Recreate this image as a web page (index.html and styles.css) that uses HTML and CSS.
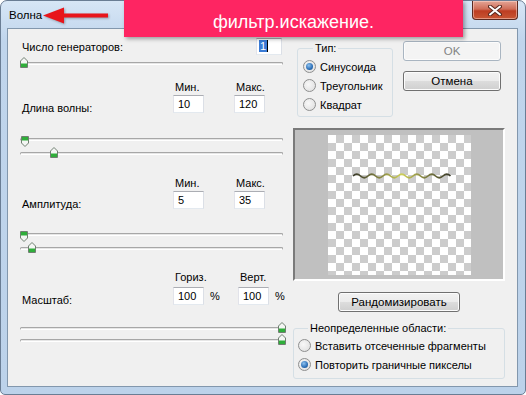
FILE: index.html
```html
<!DOCTYPE html>
<html lang="ru">
<head>
    <meta charset="UTF-8">
    <title>Волна</title>
    <link rel="stylesheet" href="styles.css">
</head>
<body>
    <div class="window">
        <div class="titlebar">
            <span class="title">Волна</span>
            <button class="close" aria-label="Закрыть">
                <svg width="14" height="11" viewBox="0 0 14 11">
                    <path d="M2 1.5 L12 9.5 M12 1.5 L2 9.5" stroke="#5a2a20" stroke-width="4" stroke-linecap="round"/>
                    <path d="M2 1.5 L12 9.5 M12 1.5 L2 9.5" stroke="#fff" stroke-width="2" stroke-linecap="round"/>
                </svg>
            </button>
        </div>

        <div class="client">
            <div class="left">
                <div class="gen-row">
                    <span class="label">Число генераторов:</span>
                    <span class="field small"><span class="sel">1</span></span>
                </div>
                <div class="slider mt3">
                    <div class="track"></div>
                    <svg class="thumb up" style="left: 0px" width="8" height="11" viewBox="0 0 8 11"><use href="#thumb-up"/></svg>
                </div>

                <div class="params mt10">
                    <span></span>
                    <span class="head">Мин.</span>
                    <span class="head">Макс.</span>
                    <span class="label low">Длина волны:</span>
                    <span class="field">10</span>
                    <span class="field">120</span>
                </div>
                <div class="slider mt21">
                    <div class="track"></div>
                    <svg class="thumb down" style="left: 1px" width="8" height="11" viewBox="0 0 8 11"><use href="#thumb-up"/></svg>
                </div>
                <div class="slider mt2">
                    <div class="track"></div>
                    <svg class="thumb up" style="left: 30px" width="8" height="11" viewBox="0 0 8 11"><use href="#thumb-up"/></svg>
                </div>

                <div class="params mt16">
                    <span></span>
                    <span class="head">Мин.</span>
                    <span class="head">Макс.</span>
                    <span class="label low">Амплитуда:</span>
                    <span class="field">5</span>
                    <span class="field">35</span>
                </div>
                <div class="slider mt20">
                    <div class="track"></div>
                    <svg class="thumb down" style="left: 0px" width="8" height="11" viewBox="0 0 8 11"><use href="#thumb-up"/></svg>
                </div>
                <div class="slider mt2">
                    <div class="track"></div>
                    <svg class="thumb up" style="left: 8px" width="8" height="11" viewBox="0 0 8 11"><use href="#thumb-up"/></svg>
                </div>

                <div class="params scale mt15">
                    <span></span>
                    <span class="head">Гориз.</span>
                    <span></span>
                    <span class="head">Верт.</span>
                    <span></span>
                    <span class="label low">Масштаб:</span>
                    <span class="field">100</span>
                    <span class="pct">%</span>
                    <span class="field">100</span>
                    <span class="pct">%</span>
                </div>
                <div class="slider mt18">
                    <div class="track"></div>
                    <svg class="thumb up" style="left: 258px" width="8" height="11" viewBox="0 0 8 11"><use href="#thumb-up"/></svg>
                </div>
                <div class="slider">
                    <div class="track"></div>
                    <svg class="thumb up" style="left: 258px" width="8" height="11" viewBox="0 0 8 11"><use href="#thumb-up"/></svg>
                </div>
            </div>

            <div class="right">
                <div class="top-row">
                    <fieldset class="group type">
                        <legend>Тип:</legend>
                        <div class="radio-row"><span class="radio on"></span>Синусоида</div>
                        <div class="radio-row"><span class="radio"></span>Треугольник</div>
                        <div class="radio-row"><span class="radio"></span>Квадрат</div>
                    </fieldset>
                    <div class="buttons">
                        <button class="btn disabled">OK</button>
                        <button class="btn">Отмена</button>
                    </div>
                </div>

                <div class="preview">
                    <div class="checker">
                        <svg width="143" height="140" viewBox="0 0 143 140">
                            <defs>
                                <linearGradient id="wave" x1="0" x2="1" y1="0" y2="0">
                                    <stop offset="0" stop-color="#3a3a2a"/>
                                    <stop offset="0.3" stop-color="#8c8c46"/>
                                    <stop offset="0.5" stop-color="#cfd05a"/>
                                    <stop offset="0.7" stop-color="#8c8c46"/>
                                    <stop offset="1" stop-color="#3a3a2a"/>
                                </linearGradient>
                            </defs>
                            <path d="M25 41 q3.75 -3.5 7.5 0 t7.5 0 t7.5 0 t7.5 0 t7.5 0 t7.5 0 t7.5 0 t7.5 0 t7.5 0 t7.5 0 t7.5 0 t7.5 0 t7.5 0" fill="none" stroke="url(#wave)" stroke-width="1.7"/>
                        </svg>
                    </div>
                </div>

                <div class="center">
                    <button class="btn wide">Рандомизировать</button>
                </div>

                <fieldset class="group areas">
                    <legend>Неопределенные области:</legend>
                    <div class="radio-row"><span class="radio"></span>Вставить отсеченные фрагменты</div>
                    <div class="radio-row"><span class="radio on"></span>Повторить граничные пикселы</div>
                </fieldset>
            </div>
        </div>

        <svg class="arrow" width="72" height="24" viewBox="0 0 72 24">
            <g fill="#e8151b">
                <polygon points="3,11.5 24,3.5 24,19.5"/>
                <rect x="22" y="9.5" width="46" height="4"/>
            </g>
        </svg>
        <div class="banner">фильтр.искажение.</div>
    </div>

    <svg width="0" height="0" class="defs">
        <defs>
            <g id="thumb-up">
                <path d="M4 0.5 L7.5 4 V10.5 H0.5 V4 Z" fill="#f4f6f4" stroke="#6f7f70"/>
                <rect x="1" y="6.5" width="6" height="3.5" fill="#2fae3a"/>
            </g>
        </defs>
    </svg>
</body>
</html>
```

FILE: styles.css
```css
body {
    margin: 0;
    width: 526px;
    height: 395px;
    overflow: hidden;
    background: #ffffff;
    font-family: "Liberation Sans", Arial, sans-serif;
    font-size: 11px;
    color: #000;
}
.defs {
    position: absolute;
}
.window {
    position: relative;
    box-sizing: border-box;
    width: 526px;
    height: 395px;
    border: 1px solid #6a7d94;
    border-radius: 7px 7px 5px 5px;
    background: linear-gradient(#d7e6f6, #c0d5ec 40px, #bcd2ea);
}
.titlebar {
    height: 27px;
    display: flex;
    align-items: flex-start;
    justify-content: space-between;
}
.title {
    margin: 8px 0 0 8px;
    font-size: 11.5px;
}
.close {
    width: 46px;
    height: 19px;
    margin-right: 7px;
    padding: 0;
    border: 1px solid #5b2a22;
    border-top: none;
    border-radius: 0 0 4px 4px;
    background: linear-gradient(#e3a596, #cf6d58 45%, #bd3d22 55%, #c85634);
    box-shadow: inset 0 0 0 1px rgba(255, 220, 210, 0.5);
    display: flex;
    align-items: center;
    justify-content: center;
}
.client {
    display: flex;
    height: 357px;
    margin: 0 7px 0 6px;
    border: 1px solid #8297ad;
    background: #f0f0f0;
}
.left {
    width: 264px;
    padding: 0 9px 0 12px;
    display: flex;
    flex-direction: column;
}
.right {
    width: 212px;
    display: flex;
    flex-direction: column;
}
.gen-row {
    margin-top: 9px;
    display: flex;
    align-items: center;
    justify-content: space-between;
}
.label {
    padding-left: 2px;
    line-height: 14px;
}
.field {
    box-sizing: border-box;
    width: 31px;
    height: 18px;
    padding: 2px 0 0 4px;
    background: #fff;
    border: 1px solid;
    border-color: #abadb3 #dbdfe6 #e3e9ef #e2e3ea;
    line-height: 13px;
}
.field.small {
    width: 26px;
    height: 17px;
    margin-right: 2px;
    padding: 1px 0 0 2px;
}
.sel {
    background: #3a7bd5;
    color: #fff;
    padding: 0 1px;
    border-right: 1px solid #000;
}
.slider {
    position: relative;
    width: 263px;
    height: 12px;
}
.track {
    margin-top: 4px;
    height: 1px;
    border: 1px solid #a7a7a7;
    border-bottom-color: #ffffff;
    border-radius: 2px;
    background: #e6e6e6;
}
.thumb {
    position: absolute;
    top: -1px;
}
.thumb.down {
    top: 2px;
    transform: scaleY(-1);
}
.params {
    display: grid;
    grid-template-columns: 153px 61px 31px;
    row-gap: 1px;
}
.params.scale {
    grid-template-columns: 153px 31px 34px 31px 16px;
    row-gap: 3px;
}
.head {
    line-height: 14px;
    padding-left: 2px;
}
.low {
    align-self: end;
    margin-bottom: -2px;
}
.pct {
    align-self: center;
    padding-left: 6px;
}
.mt2 { margin-top: 2px; }
.mt3 { margin-top: 3px; }
.mt10 { margin-top: 10px; }
.mt15 { margin-top: 15px; }
.mt16 { margin-top: 16px; }
.mt18 { margin-top: 18px; }
.mt20 { margin-top: 20px; }
.mt21 { margin-top: 21px; }
.top-row {
    display: flex;
    margin-top: 12px;
    gap: 10px;
}
.group {
    box-sizing: border-box;
    margin: 0;
    padding: 0 0 0 5px;
    border: 1px solid #d5dfe5;
    border-radius: 3px;
}
.group legend {
    padding: 0 2px;
    margin-left: 10px;
    line-height: 14px;
}
.group.type {
    width: 96px;
    height: 76px;
    margin-left: 4px;
    padding-top: 2px;
}
.group.areas {
    width: 212px;
    height: 58px;
    margin-top: 9px;
    padding-left: 4px;
    padding-top: 1px;
}
.radio-row {
    height: 19px;
    display: flex;
    align-items: center;
    gap: 4px;
}
.radio {
    box-sizing: border-box;
    width: 13px;
    height: 13px;
    border: 1px solid #8e8f8f;
    border-radius: 50%;
    background: radial-gradient(circle at 40% 40%, #f8f8f8, #dcdcdc);
    display: flex;
    align-items: center;
    justify-content: center;
}
.radio.on::after {
    content: "";
    width: 7px;
    height: 7px;
    border-radius: 50%;
    background: radial-gradient(circle at 40% 35%, #8ec2ef, #2c6fb7 60%, #17487e);
}
.buttons {
    display: flex;
    flex-direction: column;
    gap: 10px;
}
.btn {
    box-sizing: border-box;
    width: 98px;
    height: 20px;
    padding: 0;
    border: 1px solid #707070;
    border-radius: 3px;
    background: linear-gradient(#f2f2f2, #ebebeb 50%, #dddddd 50%, #cfcfcf);
    box-shadow: inset 0 0 0 1px #fcfcfc;
    font-family: inherit;
    font-size: 11.5px;
    color: #000;
}
.btn.disabled {
    border-color: #a9b5c1;
    background: #f4f4f4;
    color: #838383;
}
.btn.wide {
    width: 122px;
}
.preview {
    box-sizing: border-box;
    height: 153px;
    margin-top: 11px;
    border: 2px solid;
    border-color: #7a7a7a #ffffff #ffffff #7a7a7a;
    background: #c0c0c0;
    display: flex;
    align-items: center;
    justify-content: center;
}
.checker {
    width: 143px;
    height: 140px;
    background-color: #ffffff;
    background-image: conic-gradient(#cccccc 25%, #ffffff 0 50%, #cccccc 0 75%, #ffffff 0);
    background-size: 16px 16px;
}
.checker svg {
    display: block;
}
.center {
    margin-top: 11px;
    display: flex;
    justify-content: center;
}
.arrow {
    position: absolute;
    left: 39px;
    top: 3px;
    filter: drop-shadow(1px 1px 1px rgba(0, 0, 0, 0.3));
}
.banner {
    position: absolute;
    left: 123px;
    top: -1px;
    box-sizing: border-box;
    width: 339px;
    height: 37px;
    padding-top: 5px;
    background: #fe2562;
    box-shadow: 2px 2px 4px rgba(0, 0, 0, 0.35);
    color: #fff;
    font-size: 18px;
    line-height: 34px;
    text-align: center;
}
```
